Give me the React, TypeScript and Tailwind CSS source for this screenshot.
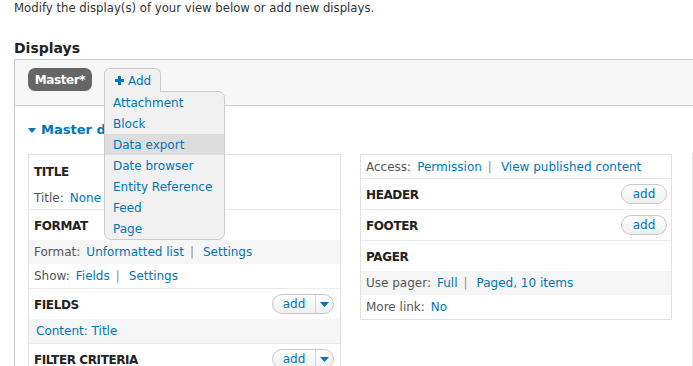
import React from "react";

const menuItems = ["Attachment", "Block", "Data export", "Date browser", "Entity Reference", "Feed", "Page"];

function Sep() {
  return <span className="ml-[6px] mr-[9px] text-[#9a8c7a]">|</span>;
}

function AddButton({ split }: { split?: boolean }) {
  return (
    <div
      className={`flex h-[20px] items-center rounded-full border border-[#c8c8c8] bg-gradient-to-b from-white to-[#efefef] text-[#0074bd] ${
        split ? "w-[62px]" : "w-[46px] justify-center"
      }`}
    >
      <span className={split ? "w-[42px] text-center leading-[18px]" : "leading-[18px]"}>add</span>
      {split && (
        <span className="flex h-full flex-1 items-center justify-center border-l border-[#d4d4d4]">
          <svg width="9" height="5" viewBox="0 0 9 5">
            <path d="M0 0h9L4.5 5z" fill="#0074bd" />
          </svg>
        </span>
      )}
    </div>
  );
}

function Heading({ title, add, split, h = "h-[30px]" }: { title: string; add?: boolean; split?: boolean; h?: string }) {
  return (
    <div className={`flex ${h} items-center justify-between pl-[5px] ${split ? "pr-[6px]" : "pr-[4px]"}`}>
      <span className="pt-[2px] text-[12px] font-bold tracking-[-0.4px] text-[#222]">{title}</span>
      {add && <AddButton split={split} />}
    </div>
  );
}

function Row({ gray, children, className = "h-[24px]" }: { gray?: boolean; children: React.ReactNode; className?: string }) {
  return (
    <div className={`flex items-center pl-[5px] ${gray ? "bg-[#f6f6f6]" : ""} ${className}`}>
      {children}
    </div>
  );
}

function Label({ children }: { children: React.ReactNode }) {
  return <span className="mr-[6px] text-[#555]">{children}</span>;
}

function A({ children }: { children: React.ReactNode }) {
  return <span className="text-[#0074bd]">{children}</span>;
}

export default function App() {
  return (
    <div className="relative h-[366px] w-[693px] overflow-hidden bg-white font-['DejaVu_Sans',Verdana,sans-serif] text-[12px] text-[#333]">
      <p className="h-[16px] pl-[14px] text-[11.7px] leading-[16px]">Modify the display(s) of your view below or add new displays.</p>
      <h2 className="mb-[1px] mt-[22px] h-[20px] pl-[14px] text-[14px] font-bold leading-[20px] text-[#222]">Displays</h2>

      <div className="ml-[14px] w-[900px] border-l border-[#cccccc]">
        {/* display tabs */}
        <div className="flex h-[47px] items-start border-y border-[#cccccc] bg-[#f7f7f7] pl-[13px] pt-[8px]">
          <div className="flex h-[23px] w-[64px] shrink-0 items-center justify-center rounded-[7px] bg-[#666666] text-[12px] font-bold tracking-[-0.4px] text-white">
            Master*
          </div>
          <div className="relative ml-[12px]">
            <div className="relative z-20 flex h-[24px] w-[57px] items-center gap-[4px] rounded-t-[6px] border border-b-0 border-[#cccccc] bg-[#f1f1f1] pl-[10px] text-[#0074bd]">
              <svg width="9" height="9" viewBox="0 0 9 9">
                <path d="M3 0h3v3h3v3H6v3H3V6H0V3h3z" fill="#0074bd" />
              </svg>
              <span>Add</span>
            </div>
            <div className="absolute left-0 top-[23px] z-10 w-[121px] rounded-b-[7px] rounded-tr-[7px] border border-[#cccccc] bg-[#f1f1f1]">
              {menuItems.map((item) => (
                <div
                  key={item}
                  className={`box-border h-[21px] whitespace-nowrap pl-[8px] pt-[1px] leading-[20px] text-[#0074bd] ${item === "Data export" ? "bg-[#dddddd]" : ""}`}
                >
                  {item}
                </div>
              ))}
            </div>
          </div>
        </div>

        {/* display details */}
        <div className="pl-[13px]">
          <div className="mt-[14px] flex h-[20px] items-center gap-[5px] text-[13px] font-bold text-[#0074bd]">
            <svg width="8" height="5" viewBox="0 0 8 5">
              <path d="M0 0h8L4 5z" fill="#0074bd" />
            </svg>
            <span>Master details</span>
          </div>

          <div className="mt-[14px] flex items-start">
            <div className="w-[313px] shrink-0 border border-[#e2e2e2]">
              <div className="border-b border-[#ebebeb]">
                <Heading title="TITLE" h="h-[32px]" />
                <Row className="h-[22px]">
                  <Label>Title:</Label>
                  <A>None</A>
                </Row>
              </div>
              <div className="border-b border-[#ebebeb]">
                <Heading title="FORMAT" />
                <Row gray>
                  <Label>Format:</Label>
                  <A>Unformatted list</A>
                  <Sep />
                  <A>Settings</A>
                </Row>
                <Row>
                  <Label>Show:</Label>
                  <A>Fields</A>
                  <Sep />
                  <A>Settings</A>
                </Row>
              </div>
              <div className="border-b border-[#ebebeb]">
                <Heading title="FIELDS" add split />
                <Row gray className="h-[24px] pl-[7px]">
                  <A>Content: Title</A>
                </Row>
              </div>
              <div>
                <Heading title="FILTER CRITERIA" add split />
                <div className="h-[40px]" />
              </div>
            </div>

            <div className="ml-[19px] w-[312px] shrink-0 border border-[#e2e2e2]">
              <Row className="h-[24px] border-b border-[#ebebeb]">
                <Label>Access:</Label>
                <A>Permission</A>
                <Sep />
                <A>View published content</A>
              </Row>
              <div className="border-b border-[#ebebeb]">
                <Heading title="HEADER" add />
              </div>
              <div className="border-b border-[#ebebeb]">
                <Heading title="FOOTER" add />
              </div>
              <div>
                <Heading title="PAGER" />
                <Row gray>
                  <Label>Use pager:</Label>
                  <A>Full</A>
                  <Sep />
                  <A>Paged, 10 items</A>
                </Row>
                <Row>
                  <Label>More link:</Label>
                  <A>No</A>
                </Row>
              </div>
            </div>

            <div className="-mt-[1px] ml-[20px] h-[300px] w-[300px] shrink-0 border border-[#e2e2e2]" />
          </div>
        </div>
      </div>
    </div>
  );
}
